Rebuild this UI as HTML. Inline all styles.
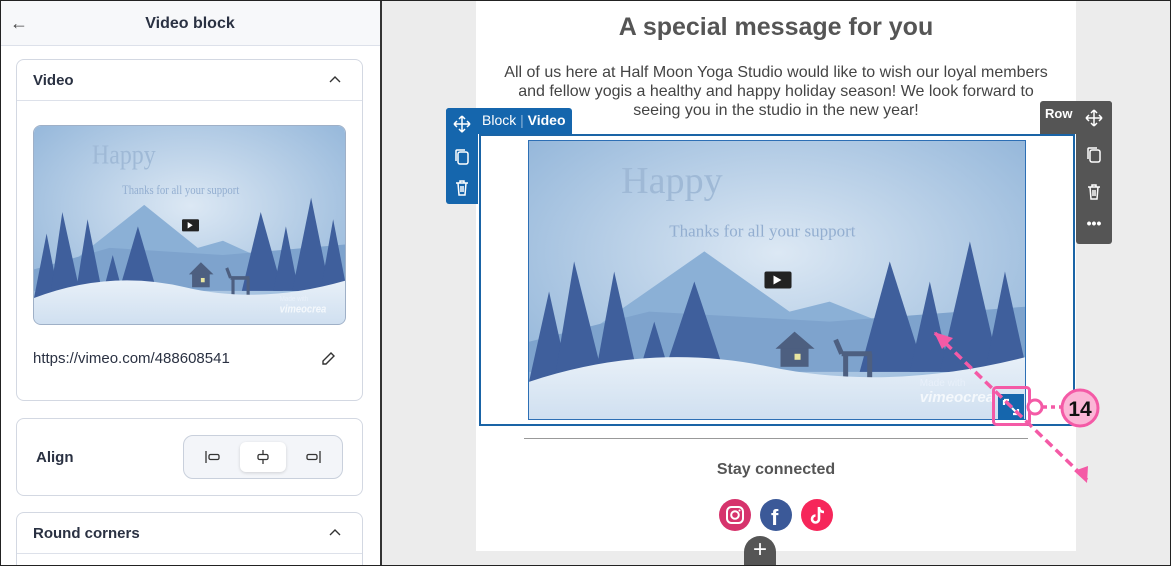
<!DOCTYPE html>
<html><head><meta charset="utf-8"><style>
*{box-sizing:border-box;margin:0;padding:0}
html,body{width:1171px;height:566px;overflow:hidden}
body{background:#ececec;font-family:"Liberation Sans",sans-serif;position:relative}
.abs{position:absolute}
.frame{position:absolute;left:0;top:0;width:1171px;height:566px;border:1px solid #222;pointer-events:none;z-index:50}
#left{left:0;top:0;width:382px;height:566px;background:#fff;border-right:2px solid #333;overflow:hidden}
.hdr{left:0;top:0;width:380px;height:46px;background:#f7f8fa;border-bottom:1px solid #dde1ea}
.card{background:#fff;border:1px solid #d3d8e2;border-radius:8px}
.t{color:#2a3142;font-weight:bold;font-size:15px}
</style></head><body>
<svg width="0" height="0" style="position:absolute;left:0;top:0">
<defs>
<radialGradient id="sky" cx="0.5" cy="0.4" r="0.7"><stop offset="0" stop-color="#dce8f4"/><stop offset="1" stop-color="#8fb3d8"/></radialGradient>
<linearGradient id="snow" x1="0" y1="0" x2="0" y2="1"><stop offset="0" stop-color="#e8f0f8"/><stop offset="1" stop-color="#cfdff0"/></linearGradient>
<symbol id="scene" viewBox="0 0 497 279" preserveAspectRatio="none">
<rect width="497" height="279" fill="url(#sky)"/>
<text x="92" y="52" font-family="Liberation Serif,serif" font-size="38" fill="#9fb9d6">Happy</text>
<text x="140" y="95" font-family="Liberation Serif,serif" font-size="17" fill="#93aed0">Thanks for all your support</text>
<polygon points="60,190 175,110 260,170 300,160 400,200 60,210" fill="#8bb0d6"/>
<polygon points="0,200 120,170 300,180 497,165 497,230 0,230" fill="#7ea3cd"/>
<g fill="#3f5f9c">
<polygon points="0,240 20,150 40,240"/><polygon points="25,240 45,120 75,240"/><polygon points="65,240 85,130 110,240"/><polygon points="135,230 165,140 195,230"/><polygon points="110,230 125,180 140,230"/><polygon points="330,230 360,120 395,230"/><polygon points="380,230 400,140 420,230"/><polygon points="410,230 440,100 470,230"/><polygon points="455,230 475,130 497,230"/>
</g>
<rect x="251" y="205" width="28" height="20" fill="#4d5f80"/><polygon points="246,207 265,190 285,207" fill="#4d5f80"/>
<rect x="265" y="212" width="6" height="6" fill="#e8e5a0"/>
<path d="M312 212 h30 M316 212 v25 M340 212 v25 M312 212 l-6 -14" stroke="#4d5f80" stroke-width="5" fill="none"/>
<path d="M0 240 Q120 200 240 225 T497 215 V279 H0Z" fill="url(#snow)"/>
<text x="390" y="244" font-size="10" fill="#e8f0fa">Made with</text>
<text x="390" y="260" font-size="15" font-style="italic" font-weight="bold" fill="#f4f8fc">vimeocrea</text>
<rect x="235" y="130" width="27" height="17" fill="#222" rx="2"/><polygon points="244,134 244,143 252,138.5" fill="#fff"/>
</symbol>
</defs></svg>

<div id="left" class="abs">
 <div class="hdr abs"></div>
 <div class="abs" style="left:10px;top:13px;font-size:18px;color:#444">&#8592;</div>
 <div class="abs t" style="left:0;width:380px;text-align:center;top:15px;font-size:16px">Video block</div>
 <div class="abs card" style="left:16px;top:59px;width:347px;height:342px"></div>
 <div class="abs" style="left:17px;top:100px;width:345px;height:1px;background:#dde1ea"></div>
 <div class="abs t" style="left:33px;top:72px">Video</div>
 <svg class="abs" style="left:328px;top:74px" width="14" height="10"><path d="M2 8 L7 3 L12 8" fill="none" stroke="#333" stroke-width="1.4"/></svg>
 <svg class="abs" style="left:33px;top:125px;border-radius:8px;border:1px solid #9fb0c7" width="313" height="200"><use href="#scene" width="313" height="200"/></svg>
 <div class="abs" style="left:33px;top:350px;font-size:15px;color:#2a3142">https://vimeo.com/488608541</div>
 <svg class="abs" style="left:320px;top:351px" width="16" height="16"><path d="M3 13 L3 10 L11 2 L14 5 L6 13Z" fill="none" stroke="#333" stroke-width="1.4"/></svg>
 <div class="abs card" style="left:16px;top:418px;width:347px;height:78px"></div>
 <div class="abs t" style="left:36px;top:449px">Align</div>
 <div class="abs" style="left:183px;top:435px;width:160px;height:44px;border:1px solid #c9d0dc;border-radius:10px;background:#f3f5f9"></div>
 <div class="abs" style="left:240px;top:442px;width:46px;height:30px;background:#fff;border-radius:6px;box-shadow:0 1px 3px rgba(0,0,0,.15)"></div>
 <svg class="abs" style="left:205px;top:450px" width="16" height="14"><path d="M1 1 V13" stroke="#333" stroke-width="1.3"/><rect x="4" y="4.5" width="10" height="5" rx="1.5" fill="none" stroke="#333" stroke-width="1.3"/></svg>
 <svg class="abs" style="left:255px;top:450px" width="16" height="14"><path d="M8 0 V4 M8 10 V14" stroke="#333" stroke-width="1.3"/><rect x="3" y="4.5" width="10" height="5" rx="1.5" fill="#fff" stroke="#333" stroke-width="1.3"/></svg>
 <svg class="abs" style="left:305px;top:450px" width="16" height="14"><path d="M15 1 V13" stroke="#333" stroke-width="1.3"/><rect x="2" y="4.5" width="10" height="5" rx="1.5" fill="none" stroke="#333" stroke-width="1.3"/></svg>
 <div class="abs" style="left:16px;top:512px;width:347px;height:54px;border:1px solid #d3d8e2;border-bottom:none;border-radius:8px 8px 0 0;background:#fff"></div>
 <div class="abs" style="left:17px;top:553px;width:345px;height:1px;background:#dde1ea"></div>
 <div class="abs t" style="left:33px;top:525px">Round corners</div>
 <svg class="abs" style="left:328px;top:527px" width="14" height="10"><path d="M2 8 L7 3 L12 8" fill="none" stroke="#333" stroke-width="1.4"/></svg>
</div>

<div class="abs" style="left:476px;top:0;width:600px;height:551px;background:#fff"></div>
<div class="abs" style="left:476px;top:13px;width:600px;text-align:center;font-size:25px;font-weight:bold;color:#555">A special message for you</div>
<div class="abs" style="left:496px;top:63px;width:560px;text-align:center;font-size:16px;line-height:19px;color:#444">All of us here at Half Moon Yoga Studio would like to wish our loyal members and fellow yogis a healthy and happy holiday season! We look forward to seeing you in the studio in the new year!</div>

<div class="abs" style="left:479px;top:134px;width:596px;height:292px;border:2px solid #1a64a6"></div>
<svg class="abs" style="left:528px;top:140px;border:1px solid #2d6fb5" width="498" height="280"><use href="#scene" width="498" height="280"/></svg>

<div class="abs" style="left:446px;top:108px;width:126px;height:26px;background:#1566ad;border-radius:3px 3px 0 0"></div>
<div class="abs" style="left:446px;top:108px;width:32px;height:96px;background:#1566ad;border-radius:3px 0 0 3px"></div>
<div class="abs" style="left:482px;top:112px;font-size:14px;color:#fff"><span>Block</span><span style="opacity:.5"> | </span><b>Video</b></div>
<svg class="abs" style="left:453px;top:115px" width="18" height="18"><path d="M9 1V17M1 9H17M9 1l-3 3M9 1l3 3M9 17l-3-3M9 17l3-3M1 9l3-3M1 9l3 3M17 9l-3-3M17 9l-3 3" stroke="#fff" stroke-width="1.5" fill="none"/></svg>
<svg class="abs" style="left:454px;top:148px" width="16" height="18"><rect x="4" y="4" width="10" height="12" rx="2" fill="none" stroke="#fff" stroke-width="1.5"/><path d="M2 13V3a1 1 0 0 1 1-1h8" stroke="#fff" stroke-width="1.5" fill="none"/></svg>
<svg class="abs" style="left:454px;top:179px" width="16" height="18"><path d="M2 4H14M6 4V2H10V4M4 4L5 16H11L12 4M7 7V13M9 7V13" stroke="#fff" stroke-width="1.5" fill="none"/></svg>

<div class="abs" style="left:1040px;top:101px;width:72px;height:33px;background:#555;border-radius:3px 3px 0 0"></div>
<div class="abs" style="left:1076px;top:101px;width:36px;height:143px;background:#555;border-radius:0 3px 3px 3px"></div>
<div class="abs" style="left:1045px;top:106px;font-size:13px;font-weight:bold;color:#fff">Row</div>
<svg class="abs" style="left:1085px;top:109px" width="18" height="18"><path d="M9 1V17M1 9H17M9 1l-3 3M9 1l3 3M9 17l-3-3M9 17l3-3M1 9l3-3M1 9l3 3M17 9l-3-3M17 9l-3 3" stroke="#fff" stroke-width="1.5" fill="none"/></svg>
<svg class="abs" style="left:1086px;top:146px" width="16" height="18"><rect x="4" y="4" width="10" height="12" rx="2" fill="none" stroke="#fff" stroke-width="1.5"/><path d="M2 13V3a1 1 0 0 1 1-1h8" stroke="#fff" stroke-width="1.5" fill="none"/></svg>
<svg class="abs" style="left:1086px;top:183px" width="16" height="18"><path d="M2 4H14M6 4V2H10V4M4 4L5 16H11L12 4M7 7V13M9 7V13" stroke="#fff" stroke-width="1.5" fill="none"/></svg>
<div class="abs" style="left:1076px;top:218px;width:36px;text-align:center;color:#fff;font-size:14px;font-weight:bold;line-height:10px">•••</div>

<div class="abs" style="left:524px;top:438px;width:504px;height:1px;background:#999"></div>
<div class="abs" style="left:476px;top:461px;width:600px;text-align:center;font-size:16px;font-weight:bold;color:#555">Stay connected</div>
<svg class="abs" style="left:718px;top:498px" width="120" height="34">
<circle cx="17" cy="17" r="16" fill="#d6336c"/><rect x="9" y="9" width="16" height="16" rx="4.5" fill="none" stroke="#fff" stroke-width="2"/><circle cx="17" cy="17" r="3.8" fill="none" stroke="#fff" stroke-width="2"/><circle cx="21.5" cy="12.5" r="1" fill="#fff"/>
<circle cx="58" cy="17" r="16" fill="#3b5998"/><text x="53" y="27" font-size="22" font-weight="bold" fill="#fff">f</text>
<circle cx="99" cy="17" r="16" fill="#f6265a"/><path d="M101 9v12a3.5 3.5 0 1 1-3.5-3.5M101 9c0 3 2 5 5 5" stroke="#fff" stroke-width="2.6" fill="none"/>
</svg>
<div class="abs" style="left:744px;top:536px;width:32px;height:30px;background:#555;border-radius:16px 16px 0 0;color:#fff;text-align:center;font-size:24px;line-height:28px">+</div>

<div class="abs" style="left:998px;top:394px;width:26px;height:26px;background:#1566ad"></div>
<svg class="abs" style="left:998px;top:394px" width="26" height="26"><path d="M6 6l6 6M6 6h5M6 6v5M20 20l-6-6M20 20h-5M20 20v-5" stroke="#fff" stroke-width="2.2" fill="none"/></svg>
<svg class="abs" style="left:920px;top:320px" width="200" height="170">
<path d="M15 13 L167 160" stroke="#f45aa6" stroke-width="3.5" stroke-dasharray="9 5" fill="none"/>
<rect x="73.5" y="67.5" width="36" height="37" rx="3" fill="none" stroke="#f45aa6" stroke-width="3"/>
<polygon points="14,12 33,18 22,29" fill="#f45aa6"/>
<polygon points="167,163 154,151 168,146" fill="#f45aa6"/>
<circle cx="115" cy="87" r="7" fill="#fff" stroke="#f45aa6" stroke-width="3"/>
<path d="M123 87 H142" stroke="#f45aa6" stroke-width="3.5" stroke-dasharray="4 4"/>
<circle cx="160" cy="88" r="18" fill="#fbb6d6" stroke="#f45aa6" stroke-width="3"/>
<text x="160" y="96" text-anchor="middle" font-size="21" font-weight="bold" fill="#111">14</text>
</svg>
<div class="frame"></div>
</body></html>
